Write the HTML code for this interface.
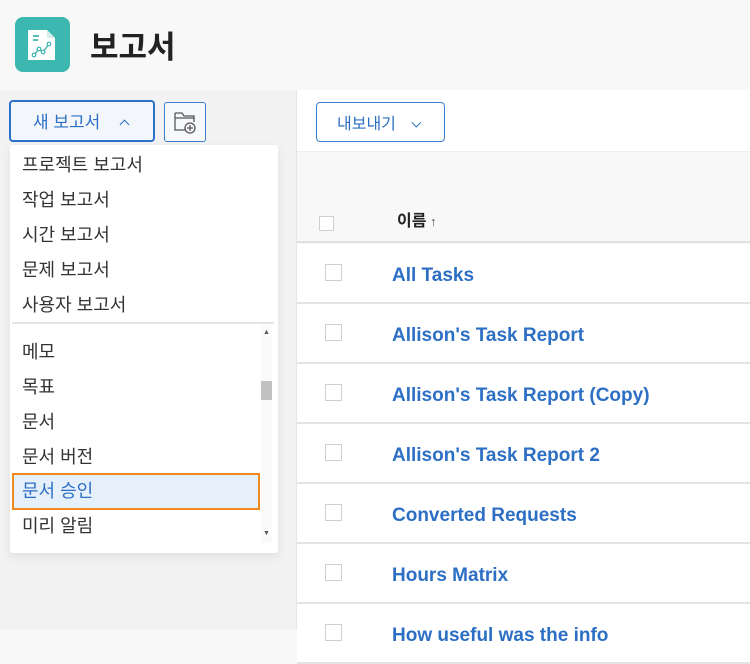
<!DOCTYPE html>
<html><head><meta charset="utf-8"><style>
*{margin:0;padding:0;box-sizing:border-box}
body{width:750px;height:630px;overflow:hidden;background:#f8f8f8;font-family:"Liberation Sans","Noto Sans CJK KR",sans-serif;position:relative}
.a{position:absolute}
.item{position:absolute;left:22px;font-size:18px;color:#333;line-height:20px}
.row{position:absolute;left:297px;right:0;height:60px;border-bottom:2px solid #e4e4e4;background:#fff}
.cb{position:absolute;left:28px;top:20px;width:17px;height:17px;border:1px solid #cfcfcf;background:#fff}
.row span{position:absolute;left:95px;top:21px;font-size:19px;font-weight:bold;color:#2c6fc4}
</style></head><body>
<div class="a" style="left:15px;top:17px;width:55px;height:55px;background:#3db8b0;border-radius:8px">
<svg width="55" height="55" viewBox="0 0 55 55"><path d="M13 13h19l8 8v22H13z" fill="#fff"/><path d="M32 13v8h8" fill="#d8efee"/><path d="M18 19h6M18 23h5" stroke="#3db8b0" stroke-width="1.8"/><path d="M19 38l5-6 4 3 6-8" stroke="#3db8b0" stroke-width="1.4" fill="none"/><circle cx="19" cy="38" r="1.8" fill="#fff" stroke="#3db8b0" stroke-width="1.2"/><circle cx="24" cy="32" r="1.8" fill="#fff" stroke="#3db8b0" stroke-width="1.2"/><circle cx="28" cy="35" r="1.8" fill="#fff" stroke="#3db8b0" stroke-width="1.2"/><circle cx="34" cy="27" r="1.8" fill="#fff" stroke="#3db8b0" stroke-width="1.2"/></svg></div>
<div class="a" style="left:90px;top:22px;font-size:31px;font-weight:bold;color:#222">보고서</div>
<div class="a" style="left:0;top:90px;width:297px;height:540px;background:#f2f2f2;border-right:1px solid #e6e6e6"></div>
<div class="a" style="left:297px;top:90px;right:0;height:62px;background:#fff;border-bottom:1px solid #eee"></div>
<div class="a" style="left:297px;top:152px;right:0;height:91px;background:#f8f8f8;border-bottom:2px solid #e0e0e0"></div>
<div class="a" style="left:319px;top:216px;width:15px;height:15px;border:1px solid #d0d0d0;background:#fff"></div>
<div class="a" style="left:397px;top:207px;font-size:16px;font-weight:bold;color:#222">이름<span style="font-size:13px;color:#555"> ↑</span></div>
<div class="row" style="top:244px"><div class="cb"></div><span>All Tasks</span></div>
<div class="row" style="top:304px"><div class="cb"></div><span>Allison's Task Report</span></div>
<div class="row" style="top:364px"><div class="cb"></div><span>Allison's Task Report (Copy)</span></div>
<div class="row" style="top:424px"><div class="cb"></div><span>Allison's Task Report 2</span></div>
<div class="row" style="top:484px"><div class="cb"></div><span>Converted Requests</span></div>
<div class="row" style="top:544px"><div class="cb"></div><span>Hours Matrix</span></div>
<div class="row" style="top:604px"><div class="cb"></div><span>How useful was the info</span></div>
<div class="a" style="left:316px;top:102px;width:129px;height:40px;border:1px solid #3d7fcf;border-radius:4px;background:#fff;color:#2c6fc4;font-size:16px;padding:7px 0 0 20px">내보내기 <span style="display:inline-block;margin-left:10px;width:7px;height:7px;border-right:1.5px solid #2c6fc4;border-bottom:1.5px solid #2c6fc4;transform:rotate(45deg) translateY(-4px)"></span></div>
<div class="a" style="left:9px;top:100px;width:146px;height:42px;border:2px solid #2c72c9;border-radius:4px;background:#f3f6fa;color:#2c6fc4;font-size:17px;padding:6px 0 0 22px">새 보고서 <span style="display:inline-block;margin-left:16px;width:7px;height:7px;border-left:1.5px solid #2c6fc4;border-top:1.5px solid #2c6fc4;transform:rotate(45deg) translateY(0px)"></span></div>
<div class="a" style="left:164px;top:102px;width:42px;height:40px;border:1px solid #3d7fcf;border-radius:3px;background:#f6f8fb">
<svg width="40" height="38" viewBox="0 0 40 38"><path d="M10 10h7l2 3h10v6M10 10v17h10M10 15h19" fill="none" stroke="#555" stroke-width="1.3"/><circle cx="25" cy="25" r="5" fill="none" stroke="#555" stroke-width="1.3"/><path d="M25 22v6M22 25h6" stroke="#555" stroke-width="1.3"/></svg></div>
<div class="a" style="left:10px;top:145px;width:268px;height:408px;background:#fff;box-shadow:0 4px 10px rgba(0,0,0,.08);border-radius:3px;overflow:hidden">
<div class="item" style="top:10px;left:12px">프로젝트 보고서</div>
<div class="item" style="top:45px;left:12px">작업 보고서</div>
<div class="item" style="top:80px;left:12px">시간 보고서</div>
<div class="item" style="top:115px;left:12px">문제 보고서</div>
<div class="item" style="top:150px;left:12px">사용자 보고서</div>
<div class="a" style="left:2px;top:177px;width:262px;height:2px;background:#e4e4e4"></div>
<div class="item" style="top:197px;left:12px">메모</div>
<div class="item" style="top:232px;left:12px">목표</div>
<div class="item" style="top:267px;left:12px">문서</div>
<div class="item" style="top:302px;left:12px">문서 버전</div>
<div class="a" style="left:2px;top:328px;width:248px;height:37px;background:#e6f0fa;border:2px solid #f0891e"></div>
<div class="item" style="top:336px;left:12px;color:#2c6fc4">문서 승인</div>
<div class="item" style="top:371px;left:12px">미리 알림</div>
<div class="a" style="left:251px;top:180px;width:11px;height:218px;background:#fafafa"></div>
<div class="a" style="left:251px;top:236px;width:11px;height:19px;background:#c1c1c1"></div>
<div class="a" style="left:253px;top:184px;font-size:7px;color:#555">▲</div>
<div class="a" style="left:253px;top:385px;font-size:7px;color:#555">▼</div>
</div>
</body></html>
